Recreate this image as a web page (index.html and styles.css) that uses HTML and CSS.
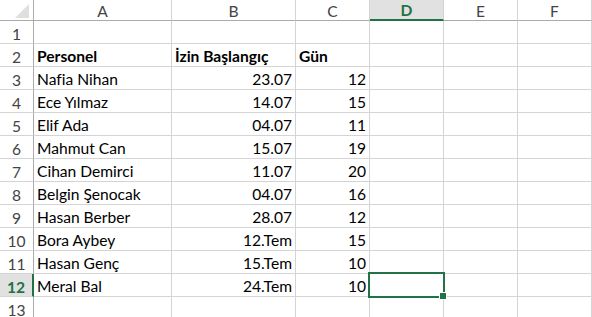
FILE: index.html
```html
<!DOCTYPE html>
<html lang="tr">
<head>
    <meta charset="UTF-8">
    <meta name="viewport" content="width=device-width, initial-scale=1.0">
    <title>Sheet</title>
    <link rel="stylesheet" href="styles.css">
</head>
<body>
    <div class="sheet">
        <div class="hd corner"><span class="tri"></span></div>
        <div class="hd col">A</div>
        <div class="hd col">B</div>
        <div class="hd col">C</div>
        <div class="hd col sel">D</div>
        <div class="hd col">E</div>
        <div class="hd col">F</div>

        <div class="hd row">1</div>
        <div class="c"></div><div class="c"></div><div class="c"></div><div class="c"></div><div class="c"></div><div class="c"></div>

        <div class="hd row">2</div>
        <div class="c b">Personel</div><div class="c b">İzin Başlangıç</div><div class="c b">Gün</div><div class="c"></div><div class="c"></div><div class="c"></div>

        <div class="hd row">3</div>
        <div class="c">Nafia Nihan</div><div class="c n">23.07</div><div class="c n">12</div><div class="c"></div><div class="c"></div><div class="c"></div>

        <div class="hd row">4</div>
        <div class="c">Ece Yılmaz</div><div class="c n">14.07</div><div class="c n">15</div><div class="c"></div><div class="c"></div><div class="c"></div>

        <div class="hd row">5</div>
        <div class="c">Elif Ada</div><div class="c n">04.07</div><div class="c n">11</div><div class="c"></div><div class="c"></div><div class="c"></div>

        <div class="hd row">6</div>
        <div class="c">Mahmut Can</div><div class="c n">15.07</div><div class="c n">19</div><div class="c"></div><div class="c"></div><div class="c"></div>

        <div class="hd row">7</div>
        <div class="c">Cihan Demirci</div><div class="c n">11.07</div><div class="c n">20</div><div class="c"></div><div class="c"></div><div class="c"></div>

        <div class="hd row">8</div>
        <div class="c">Belgin Şenocak</div><div class="c n">04.07</div><div class="c n">16</div><div class="c"></div><div class="c"></div><div class="c"></div>

        <div class="hd row">9</div>
        <div class="c">Hasan Berber</div><div class="c n">28.07</div><div class="c n">12</div><div class="c"></div><div class="c"></div><div class="c"></div>

        <div class="hd row">10</div>
        <div class="c">Bora Aybey</div><div class="c n">12.Tem</div><div class="c n">15</div><div class="c"></div><div class="c"></div><div class="c"></div>

        <div class="hd row">11</div>
        <div class="c">Hasan Genç</div><div class="c n">15.Tem</div><div class="c n">10</div><div class="c"></div><div class="c"></div><div class="c"></div>

        <div class="hd row sel">12</div>
        <div class="c">Meral Bal</div><div class="c n">24.Tem</div><div class="c n">10</div><div class="c active"></div><div class="c"></div><div class="c"></div>

        <div class="hd row">13</div>
        <div class="c"></div><div class="c"></div><div class="c"></div><div class="c"></div><div class="c"></div><div class="c"></div>
    </div>
</body>
</html>
```

FILE: styles.css
```css
* {
    box-sizing: border-box;
}

body {
    margin: 0;
    background: #fff;
    font-family: Lato, "Open Sans", sans-serif;
    font-size: 15.6px;
    color: #000;
    overflow: hidden;
}

.sheet {
    display: grid;
    grid-template-columns: 34px 138px 124px 74px 74px 74px 74px;
    grid-template-rows: 21px repeat(13, 23px);
}

.hd {
    display: flex;
    align-items: center;
    justify-content: center;
    color: #444;
    background: #fff;
    font-size: 15.6px;
}

.corner {
    position: relative;
    border-right: 1px solid #ababab;
    border-bottom: 1px solid #ababab;
}

.tri {
    position: absolute;
    left: 15px;
    top: 4px;
    width: 0;
    height: 0;
    border-left: 14px solid transparent;
    border-bottom: 14px solid #dfdfdf;
}

.col {
    border-right: 1px solid #d4d4d4;
    border-bottom: 1px solid #ababab;
    padding-top: 1px;
}

.row {
    border-right: 1px solid #ababab;
    border-bottom: 1px solid #d4d4d4;
    padding-top: 3px;
}

.hd.sel {
    background: #e1e1e1;
    color: #217346;
    font-weight: bold;
}

.col.sel {
    border-bottom: 2px solid #217346;
}

.row.sel {
    border-right: 2px solid #217346;
}

.c {
    display: flex;
    align-items: flex-end;
    padding: 0 3px 1px 3px;
    border-right: 1px solid #d4d4d4;
    border-bottom: 1px solid #d4d4d4;
    white-space: nowrap;
}

.b {
    font-weight: bold;
}

.n {
    justify-content: flex-end;
}

.active {
    position: relative;
}

.active::after {
    content: "";
    position: absolute;
    top: -2px;
    left: -2px;
    right: -2px;
    bottom: -2px;
    border: 2px solid #217346;
    z-index: 2;
}

.active::before {
    content: "";
    position: absolute;
    right: -4px;
    bottom: -4px;
    width: 6px;
    height: 6px;
    background: #217346;
    border: 1px solid #fff;
    z-index: 3;
}
```
